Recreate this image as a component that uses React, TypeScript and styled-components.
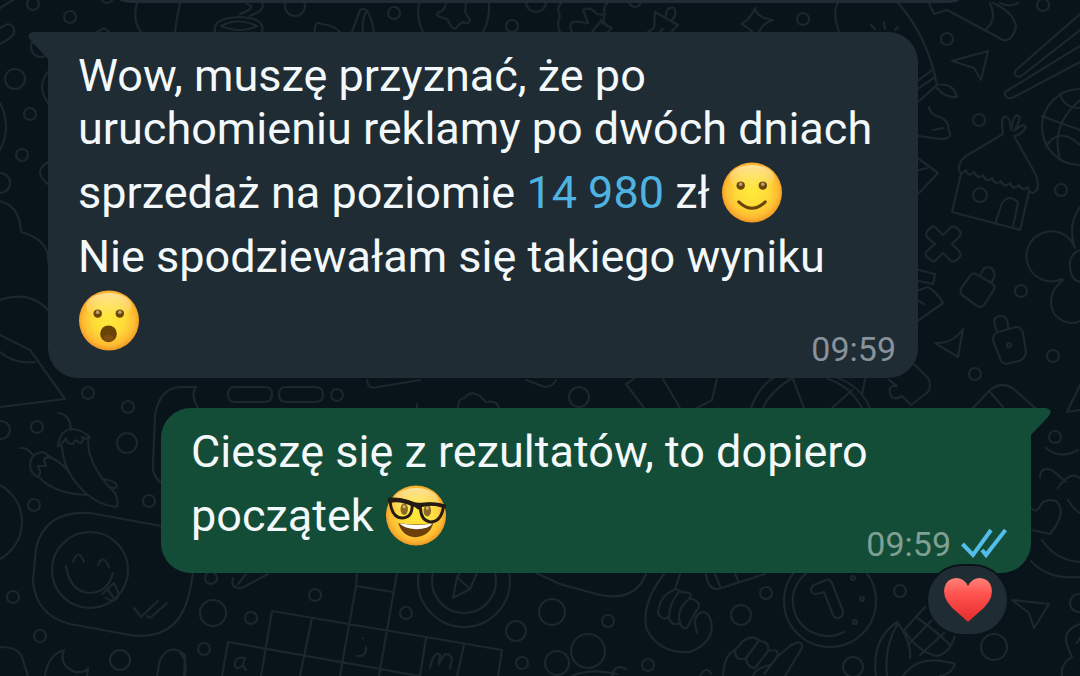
import React from "react";
import styled, { createGlobalStyle } from "styled-components";

const GlobalStyle = createGlobalStyle`
  * { box-sizing: border-box; }
  body {
    margin: 0;
    background: #09141a;
    font-family: Roboto, "Liberation Sans", sans-serif;
  }
`;

const Chat = styled.main`
  position: relative;
  display: flex;
  flex-direction: column;
  min-height: 100vh;
  padding: 0 49px 24px 48px;
  overflow: hidden;
`;

const Wallpaper = styled.svg`
  position: absolute;
  inset: 0;
  width: 100%;
  height: 100%;
  fill: none;
  stroke: #1c262c;
  stroke-width: 2.2;
  stroke-linecap: round;
  stroke-linejoin: round;
`;

const PreviousMessage = styled.div`
  position: relative;
  height: 3px;
  margin: 0 72px 29px 72px;
  background: #1f2c34;
  border-radius: 0 0 14px 14px / 0 0 3px 3px;
`;

const Bubble = styled.article<{ $outgoing?: boolean }>`
  position: relative;
  display: flex;
  flex-direction: column;
  align-self: ${(p) => (p.$outgoing ? "flex-end" : "flex-start")};
  width: 100%;
  max-width: 870px;
  margin-bottom: 30px;
  padding: 17px ${(p) => (p.$outgoing ? "24px" : "22px")} 9px 30px;
  background: ${(p) => (p.$outgoing ? "#144d37" : "#1f2c34")};
  border-radius: ${(p) => (p.$outgoing ? "30px 0 30px 30px" : "0 30px 30px 30px")};
`;

const Tail = styled.svg<{ $outgoing?: boolean }>`
  position: absolute;
  top: 0;
  ${(p) => (p.$outgoing ? "right: -20px" : "left: -20px")};
  width: 21px;
  height: 28px;
  fill: ${(p) => (p.$outgoing ? "#144d37" : "#1f2c34")};
  ${(p) => (p.$outgoing ? "" : "transform: scaleX(-1)")};
`;

const Text = styled.p`
  margin: 0;
  color: #f3f8fa;
  font-size: 45px;
  line-height: 53px;
`;

const NumberLink = styled.a`
  color: #4fb3e2;
  text-decoration: none;
`;

const Emoji = styled.svg`
  width: 62px;
  height: 61px;
  margin: 7px 0;
  vertical-align: -22px;
`;

const Meta = styled.footer<{ $outgoing?: boolean }>`
  display: flex;
  align-items: center;
  align-self: flex-end;
  gap: 10px;
  margin-top: -29px;
  color: ${(p) => (p.$outgoing ? "#7fa092" : "#87929a")};
  font-size: 34px;
  line-height: 40px;
`;

const Ticks = styled.svg`
  width: 46px;
  height: 32px;
  fill: none;
  stroke: #53bdeb;
  stroke-width: 4;
`;

const Reaction = styled.button`
  position: absolute;
  right: 22px;
  bottom: -63px;
  display: flex;
  align-items: center;
  justify-content: center;
  width: 83px;
  height: 72px;
  padding: 0;
  border: 2px solid #09141a;
  border-radius: 36px;
  background: #1f2c34;
`;

const Heart = styled.svg`
  width: 50px;
  height: 46px;
`;

const dots: [number, number, number][] = [
  [33, 4, 6], [70, 17, 6], [15, 79, 10], [30, 114, 6], [22, 155, 6], [0, 183, 10],
  [41, 47, 10], [107, -3, 6], [295, 6, 10], [394, 13, 6], [536, 2, 10], [512, 26, 6],
  [635, 1, 6], [803, 19, 6], [1043, 5, 6], [947, 39, 6], [979, 120, 6], [980, 195, 7],
  [1061, 190, 6], [1021, 291, 6], [1053, 356, 6], [975, 374, 6], [88, 393, 6],
  [128, 407, 6], [37, 427, 6], [127, 443, 10], [1, 430, 9], [34, 505, 6], [149, 501, 6],
  [13, 597, 6], [40, 636, 6], [120, 660, 10], [211, 578, 6], [213, 613, 13],
  [251, 618, 6], [204, 649, 6], [315, 595, 6], [406, 613, 6], [516, 631, 10],
  [522, 663, 6], [552, 612, 13], [608, 621, 6], [588, 651, 17], [557, 663, 12],
  [648, 665, 6], [741, 615, 10], [766, 593, 6], [853, 667, 10], [900, 591, 6],
  [994, 647, 13], [1079, 603, 9], [579, 397, 10], [337, 395, 6], [-20, 522, 42],
  [90, 570, 38], [464, 581, 46], [464, 581, 32], [830, 601, 46], [1055, 437, 6],
  [853, 578, 2], [862, 599, 2], [855, 622, 2], [1009, 345, 2],
];

const doodles = [
  // hat, crayon and leaves along the left edge
  "M0 8L16 -2M0 28L8 24Q15 25 14 33Q12 38 0 44M0 103Q12 127 0 150M48 72Q36 86 48 103M48 162Q32 172 48 184",
  "M0 201Q20 206 21 232M21 232Q50 240 48 262M0 300Q30 290 48 310M0 335L30 350L65 399L0 407M0 352Q14 364 35 362",
  // jar, coffee cup and leaf
  "M137 3Q132 20 141 32M180 3Q177 16 175 32M97 32L104 28L109 32",
  "M215 32Q212 18 239 17Q266 18 262 32M221 26Q238 17 257 26Q240 34 221 26M247 4Q258 7 240 14M262 3Q266 10 250 16",
  "M315 32Q314 20 322 24Q335 26 340 32M352 32L360 10Q369 4 374 32M363 32Q361 20 367 10",
  // star badge, cookie and bell
  "M419 3Q416 18 423 32M489 3Q490 20 483 32M446 3Q445 11 439 12Q435 15 440 17L447 19Q451 28 455 29L462 22Q469 25 470 20L465 12L466 3",
  "M561 3Q556 10 560 16Q556 24 560 32M572 32Q566 20 580 22L588 23L583 10Q590 6 597 14L605 15Q602 6 608 3M605 15Q600 24 612 28L608 32M592 32L600 22M601 20L603 24",
  "M655 12L678 25L672 31M655 12L654 28L648 32M666 16Q666 6 674 8Q678 14 672 20M660 32L663 29",
  // sparkle and stocking
  "M755 8Q757 18 773 20Q762 24 759 32M755 8Q750 20 741 24Q748 27 752 32M838 3Q832 12 839 32M898 3Q927 35 937 85L919 101M919 80L932 70M919 88L935 77",
  "M871 25L875 29M884 22L885 29M898 27L895 30M937 85Q953 82 957 97Q945 98 937 88M929 3L934 14L947 10L1003 40Q1012 42 1016 27Q1014 12 993 3M990 3Q998 20 985 30M1000 3Q1010 8 1018 3",
  // paper plane, chopsticks
  "M952 61L988 51L981 80L974 68ZM1080 14L1016 70Q1012 76 1020 77L1080 30M1080 46L1005 92Q1004 99 1012 98L1080 62",
  // basketball
  "M1080 89A38 38 0 0 0 1080 165M1060 94Q1064 108 1080 108M1042 116Q1060 123 1080 130M1080 100Q1050 125 1060 159M1046 146Q1060 126 1080 145",
  // ice cream
  "M929 107Q930 115 940 117Q950 122 948 129Q955 139 940 139L919 136M933 130L943 128M919 159L938 173L919 193M919 170L927 168",
  // hut
  "M1003 134Q1000 115 1006 117Q1010 117 1011 130Q1014 112 1019 116Q1021 120 1014 131Q1024 122 1026 127Q1022 135 1014 136L1036 175Q1041 190 1033 193Q1028 192 1028 187Q1022 192 1019 185Q1013 191 1010 183Q1004 189 1001 181Q995 186 992 178Q986 183 983 175Q978 180 974 172Q968 178 966 170Q961 176 959 170Q958 162 966 156L1003 134M961 174L952 212L1020 230L1029 192M995 224L1002 203Q1010 193 1018 203L1013 227",
  // cross
  "M928 230L932 227Q934 225 937 229L943 235L950 228Q953 225 957 228L960 231Q962 234 959 237L952 244L959 251Q962 255 959 258L955 261Q952 263 949 259L943 253L937 259Q934 263 931 260L927 257Q924 254 927 251L935 244L927 237Q925 234 928 230Z",
  // bag and padlock
  "M976 274L993 284Q996 287 993 291L984 305Q981 308 977 306L962 295Q959 291 962 287L970 276Q973 272 976 274ZM981 274Q984 265 991 268Q998 273 991 283",
  "M919 270L935 274L933 284L919 281M919 290L928 287Q937 292 943 303L919 320M919 301L924 304",
  "M998 332L1016 327Q1021 327 1023 333L1026 352Q1025 359 1019 361L1006 364Q1001 363 1000 358L993 340Q993 334 998 332ZM997 331Q990 316 1001 316Q1009 317 1008 328",
  // flower
  "M1080 207Q1067 225 1075 248M1075 248A25 25 0 1 0 1062 279M1063 280Q1044 296 1055 315Q1067 327 1080 321M1080 250Q1069 254 1070 267Q1071 280 1080 282",
  "M935 343Q953 344 963 329L958 357ZM1080 385L1067 412L1080 410M973 408L990 390Q1003 380 1015 390L1035 408M990 392L1003 407",
  "M913 363L928 378Q932 385 928 392L911 405L902 396Q892 402 890 393Q888 385 897 386L889 380",
  // strip between the messages
  "M235 387H265Q272 387 272 394.500Q272 402 265 402H235Q228 402 228 394.500Q228 387 235 387ZM286 387H316Q323 387 323 394.500Q323 402 316 402H286Q279 402 279 394.500Q279 387 286 387Z",
  "M367 380Q368 390 378 387L420 380M458 408Q458 398 465 398Q470 390 480 396L486 402Q497 400 499 408M526 380L545 387Q554 386 556 380M417 408V404",
  "M626 384L644 408M626 384L634 379M663 379L680 408M697 408L712 400L717 379M751 408Q765 370 800 372Q855 372 870 408M763 408Q770 392 792 378M793 379L804 408M832 408L852 390M828 379Q850 386 862 408M862 395L865 379",
  // chillies
  "M58 413Q70 414 71 430M20 448Q27 447 32 454M58 446Q60 430 72 429Q84 430 90 438L86 439L82 437Q84 445 78 442Q76 438 73 444Q66 444 66 438L60 446M62 447Q64 475 88 495Q100 505 116 507Q120 504 115 493Q96 475 89 452L88 440M30 466Q30 453 43 452L52 458Q46 456 44 460L46 466L38 466Q42 474 38 477Q31 474 30 466M40 478Q55 494 88 495M52 458Q62 463 68 471M102 479Q115 480 117 486Q115 490 110 487",
  // phone
  "M161 483Q152 475 153 465L155 415Q160 388 180 387L196 387Q190 395 198 408",
  // sticker with a smiley
  "M161 526L90 513Q45 510 36 548L33 580Q35 615 70 624L130 635Q180 642 190 590L193 573M66 566Q70 592 90 593Q108 592 113 573M73 562Q78 547 84 562M98 565Q103 553 109 567M102 594L114 583L119 594Q115 605 106 598M108 590L113 597M134 608L141 617L158 601M147 616L150 618L167 603",
  // moon and lower left shapes
  "M45 676Q48 655 64 650Q58 665 75 672Q85 673 88 668L87 676M0 647Q18 647 22 657L28 676M157 676L160 660Q170 642 185 655L184 676M180 653Q188 660 185 676",
  // pencil
  "M233 578Q230 589 242 588L268 574M238 584L246 574",
  // crossword
  "M272 611L502 650L498 676M228 642L420 676M272 611L261 676M228 642L222 676M312 618L300 676M356 586L340 676M397 573L379 676M357 574L356 586L393 592M426 638L420 676M464 645L457 676M244 658Q234 656 235 666Q237 671 243 665L245 658M243 666L246 670M363 638V638.500M366 647Q367 657 357 656M430 668Q434 650 440 655L439 664Q445 648 452 658L450 668",
  // compass needle
  "M457 577L453 598L470 589L477 573M457 577L470 589M457 577L461 572",
  // fists and plates
  "M536 573L560 584L600 595Q635 602 646 574M664 574Q640 605 647 630Q660 654 690 652Q718 640 710 618Q706 610 700 613Q694 617 695 624L697 633M680 574L675 589M674 590Q660 595 658 613Q662 621 669 617Q670 600 680 591Q674 588 674 590M681 592Q696 592 688 600Q676 610 680 623Q672 627 669 618M689 598Q705 602 695 613L687 628Q681 629 680 622M706 574Q708 590 718 589L765 574M715 574L720 586M735 574L739 582",
  "M723 676Q724 655 735 650L743 641Q752 634 760 641Q770 642 768 651Q780 648 777 657L790 646Q803 638 802 648L785 676M735 650Q735 662 746 658L758 642M746 659Q747 667 755 668L768 651M753 676Q755 668 770 665M777 657L764 674M612 676Q615 663 626 669M700 676Q706 665 711 674M572 676Q590 668 617 674",
  // coin
  "M844 632A35 35 0 1 1 830 566M814 585L826 580Q830 579 832 583L843 611Q844 616 839 618Q835 619 833 615L824 592L816 594Q812 594 811 590Q811 587 814 585Z",
  // corn
  "M876 676Q871 640 897 622Q912 642 910 658M887 676Q884 647 897 625M903 676Q919 653 955 664Q952 674 940 676M905 629L925 607M904 630Q917 651 936 656M916 617Q935 630 950 645M908 645L932 620M920 655L944 633M936 656Q950 654 955 635",
  "M1012 600L1049 604L1034 628L1029 613ZM1080 624Q1062 630 1067 645L1072 657Q1060 664 1062 676M1080 638L1077 643",
  // hearts on the right
  "M1031 508Q1037 514 1040 506Q1045 498 1056 501Q1068 512 1050 534L1032 530M1068 500Q1075 511 1080 513M1042 540Q1055 560 1080 562M1031 561Q1048 580 1080 577M1040 478Q1040 466 1052 470L1066 482M1058 488Q1070 470 1080 478M1046 448Q1060 460 1078 450",
];

const Face = ({ id }: { id: string }) => (
  <>
    <defs>
      <radialGradient id={id} cx="50%" cy="48%" r="54%">
        <stop offset="0" stopColor="#ffe83a" />
        <stop offset="0.500" stopColor="#fedb38" />
        <stop offset="0.800" stopColor="#fdbb32" />
        <stop offset="1" stopColor="#ee9022" />
      </radialGradient>
      <linearGradient id={id + "-shine"} x1="0" y1="0" x2="0" y2="1">
        <stop offset="0" stopColor="#fff3c4" stopOpacity="0.700" />
        <stop offset="1" stopColor="#fff0a0" stopOpacity="0" />
      </linearGradient>
    </defs>
    <circle cx="31" cy="31" r="30.500" fill={`url(#${id})`} />
    <ellipse cx="31" cy="16" rx="23" ry="13" fill={`url(#${id}-shine)`} />
  </>
);

const Eyes = () => (
  <g>
    <circle cx="19.500" cy="24" r="4.300" fill="#6a4408" />
    <circle cx="42" cy="24" r="4.300" fill="#6a4408" />
    <circle cx="19.500" cy="22.500" r="1.900" fill="#b79b72" />
    <circle cx="42" cy="22.500" r="1.900" fill="#b79b72" />
  </g>
);

const SmileEmoji = () => (
  <Emoji viewBox="0 0 62 62" role="img" aria-label="Uśmiech">
    <Face id="smile" />
    <Eyes />
    <path d="M17.500 40.500Q31 53.500 44.500 40.500" fill="none" stroke="#6a4408" strokeWidth="3" strokeLinecap="round" />
  </Emoji>
);

const SurprisedEmoji = () => (
  <Emoji viewBox="0 0 62 62" role="img" aria-label="Zaskoczenie">
    <Face id="surprised" />
    <Eyes />
    <circle cx="30.500" cy="44.500" r="8.500" fill="#6a4206" />
    <ellipse cx="30.500" cy="49" rx="5.500" ry="3.500" fill="#7d4e0c" />
  </Emoji>
);

const NerdEmoji = () => (
  <Emoji viewBox="0 0 62 62" role="img" aria-label="Okulary">
    <Face id="nerd" />
    <ellipse cx="19" cy="24.500" rx="3.800" ry="6" fill="#70480d" />
    <ellipse cx="42.500" cy="26" rx="3.800" ry="6" fill="#70480d" />
    <circle cx="19" cy="22" r="1.700" fill="#c5a469" />
    <circle cx="42.500" cy="23.500" r="1.700" fill="#c5a469" />
    <path d="M13 38.500Q30 41.500 48.500 39Q45 52.500 30 53Q17 52 13 38.500Z" fill="#6d3f0b" />
    <path d="M14 39Q30 42 47.500 39.500Q44 45 31 45Q18 44 14 39Z" fill="#fff" />
    <path
      d="M4.500 15Q16 14 27 18.500Q28 33 17.500 33.500Q6 34 4.500 15ZM35.500 20.500Q48 18 59 21Q57 37.500 45.500 37.500Q35 36 35.500 20.500Z"
      fill="#fff27a"
      fillOpacity="0.200"
      stroke="#241c14"
      strokeWidth="3"
      strokeLinejoin="round"
    />
    <path d="M2 13Q14 11.500 28 17Q32 18.500 36 18Q50 16.500 61.500 20L61 24.500L58 23Q48 19.500 36 22.500Q34 23 33.500 25.500Q30 21.500 27 21.500Q15 16 5 18L2.500 17.500Z" fill="#241c14" />
  </Emoji>
);

export default function App() {
  return (
    <>
      <GlobalStyle />
      <Chat>
        <Wallpaper viewBox="0 0 1080 676" preserveAspectRatio="xMinYMin slice" aria-hidden="true">
          {dots.map(([cx, cy, r], i) => (
            <circle key={i} cx={cx} cy={cy} r={r} />
          ))}
          {doodles.map((d, i) => (
            <path key={i} d={d} />
          ))}
        </Wallpaper>
        <PreviousMessage />
        <Bubble>
          <Tail viewBox="0 0 21 28" aria-hidden="true">
            <path d="M0 0H16Q24 2 18 9L1 27H0Z" />
          </Tail>
          <Text>
            Wow, muszę przyznać, że po uruchomieniu reklamy po dwóch dniach sprzedaż na poziomie{" "}
            <NumberLink href="tel:14980">14 980</NumberLink> zł <SmileEmoji />
            <br />
            Nie spodziewałam się takiego wyniku <SurprisedEmoji />
          </Text>
          <Meta>
            <time>09:59</time>
          </Meta>
        </Bubble>
        <Bubble $outgoing>
          <Tail $outgoing viewBox="0 0 21 28" aria-hidden="true">
            <path d="M0 0H16Q24 2 18 9L1 27H0Z" />
          </Tail>
          <Text>
            Cieszę się z rezultatów, to dopiero początek <NerdEmoji />
          </Text>
          <Meta $outgoing>
            <time>09:59</time>
            <Ticks viewBox="0 0 46 32" role="img" aria-label="Przeczytane">
              <path d="M1.500 16L12 27L30 2M21 22L25 27L44.500 2" />
            </Ticks>
          </Meta>
          <Reaction type="button" aria-label="Reakcja: serce">
            <Heart viewBox="0 0 50 46" aria-hidden="true">
              <defs>
                <linearGradient id="heart" x1="0" y1="0" x2="0" y2="1">
                  <stop offset="0" stopColor="#ff8277" />
                  <stop offset="0.350" stopColor="#ff5450" />
                  <stop offset="1" stopColor="#e52b2b" />
                </linearGradient>
              </defs>
              <path
                d="M25 45Q22 42 15 36Q1 25 1 14Q2 2 13 1Q21 1 25 9Q29 1 37 1Q48 2 49 14Q49 25 35 36Q28 42 25 45Z"
                fill="url(#heart)"
              />
            </Heart>
          </Reaction>
        </Bubble>
      </Chat>
    </>
  );
}
